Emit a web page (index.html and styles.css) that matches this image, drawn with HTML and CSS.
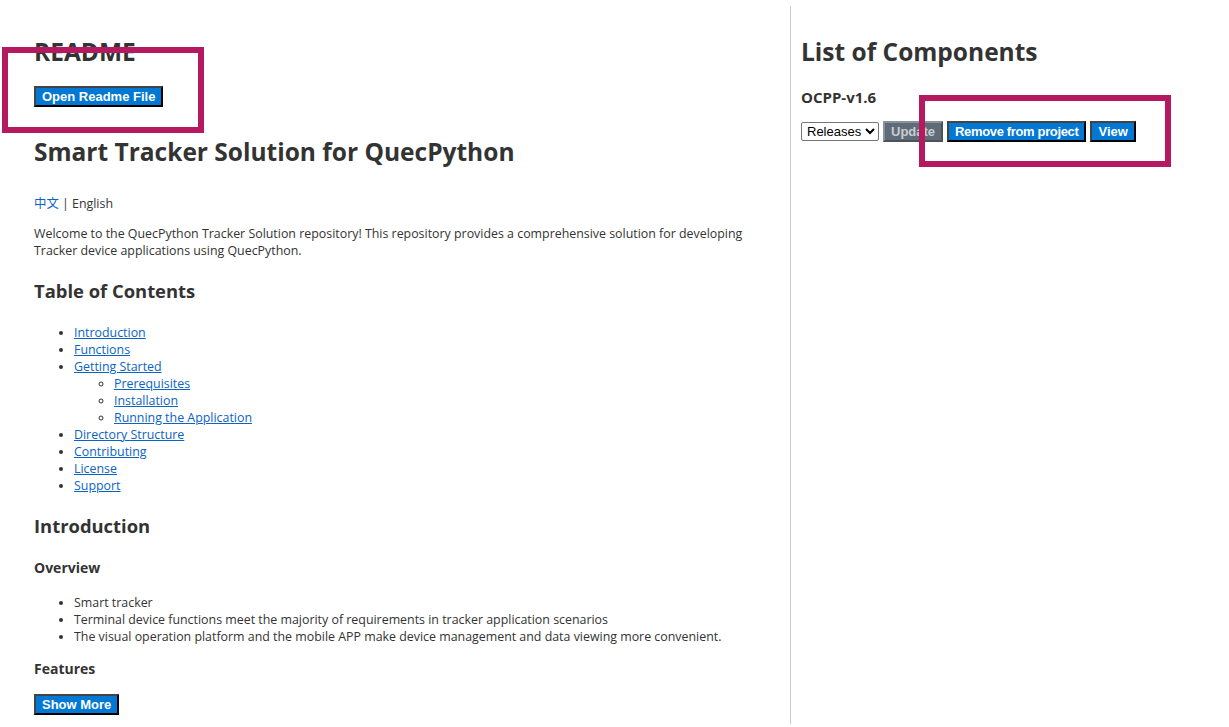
FILE: index.html
```html
<!DOCTYPE html>
<html lang="en">
<head>
<meta charset="utf-8">
<title>README</title>
<link rel="stylesheet" href="styles.css">
</head>
<body>
<div class="page">
  <main class="readme">
    <h1 class="h1 first">README</h1>
    <div class="btn-row"><button class="btn">Open Readme File</button></div>
    <h1 class="h1 title">Smart Tracker Solution for QuecPython</h1>
    <p class="lang"><a class="plain-link" href="#">中文</a> | English</p>
    <p class="intro">Welcome to the QuecPython Tracker Solution repository! This repository provides a comprehensive solution for developing Tracker device applications using QuecPython.</p>
    <h2 class="h2 toc-title">Table of Contents</h2>
    <ul class="list toc">
      <li><a href="#">Introduction</a></li>
      <li><a href="#">Functions</a></li>
      <li><a href="#">Getting Started</a>
        <ul class="sub">
          <li><a href="#">Prerequisites</a></li>
          <li><a href="#">Installation</a></li>
          <li><a href="#">Running the Application</a></li>
        </ul>
      </li>
      <li><a href="#">Directory Structure</a></li>
      <li><a href="#">Contributing</a></li>
      <li><a href="#">License</a></li>
      <li><a href="#">Support</a></li>
    </ul>
    <h2 class="h2 intro-title">Introduction</h2>
    <h3 class="h3 overview">Overview</h3>
    <ul class="list points">
      <li>Smart tracker</li>
      <li>Terminal device functions meet the majority of requirements in tracker application scenarios</li>
      <li>The visual operation platform and the mobile APP make device management and data viewing more convenient.</li>
    </ul>
    <h3 class="h3 features">Features</h3>
    <div class="btn-row more"><button class="btn">Show More</button></div>
  </main>
  <aside class="components">
    <h1 class="h1 first">List of Components</h1>
    <h3 class="h3 comp-name">OCPP-v1.6</h3>
    <div class="controls">
      <select class="select"><option>Releases</option></select>
      <button class="btn btn-gray">Update</button>
      <button class="btn btn-tight">Remove from project</button>
      <button class="btn">View</button>
    </div>
  </aside>
</div>
<div class="mark mark-left"></div>
<div class="mark mark-right"></div>
</body>
</html>
```

FILE: styles.css
```css
html, body {
  margin: 0;
  padding: 0;
  background: #ffffff;
}
body {
  font-family: "Open Sans", "Noto Sans", "Noto Sans CJK SC", sans-serif;
  font-size: 12.4px;
  line-height: 17px;
  color: #333333;
}
.page {
  display: flex;
  padding-top: 6px;
}
.readme {
  box-sizing: border-box;
  width: 791px;
  height: 718px;
  padding: 0 26px 0 34px;
  border-right: 1px solid #cccccc;
  overflow: hidden;
}
.components {
  flex: 1;
  padding-left: 10px;
}
.h1 {
  font-size: 24.5px;
  line-height: 32px;
  font-weight: 700;
  margin: 0;
}
.h1.first { margin-top: 30px; }
.h1.title { margin-top: 29px; }
.h2 {
  font-size: 18.4px;
  line-height: 26px;
  font-weight: 700;
  margin: 0;
}
.h3 {
  font-size: 14px;
  line-height: 20px;
  font-weight: 700;
  margin: 0;
}
p { margin: 0; }
.btn-row { margin-top: 18px; }
.btn-row.more { margin-top: 15px; }
.btn {
  font-family: "Liberation Sans", Arial, sans-serif;
  font-size: 13px;
  line-height: 15px;
  font-weight: 700;
  color: #ffffff;
  background: #0078d4;
  padding: 1px 6px;
  margin: 0;
  border-width: 2px;
  border-style: solid;
  border-color: #444444 #000000 #000000 #444444;
  vertical-align: middle;
}
.btn-gray {
  background: #5f6b77;
  color: #c9cdd1;
  border-color: #8a939c #4a525a #4a525a #8a939c;
}
.btn-tight { letter-spacing: -0.35px; }
.lang { margin-top: 27px; }
.intro { margin-top: 13px; }
a { color: #0b63c4; }
.plain-link { text-decoration: none; }
.toc-title { margin-top: 19px; }
.list {
  margin: 0;
  padding-left: 40px;
}
.sub {
  margin: 0;
  padding-left: 40px;
  list-style-type: circle;
}
.toc { margin-top: 20px; }
.intro-title { margin-top: 19px; }
.overview { margin-top: 19px; }
.points { margin-top: 16px; }
.features { margin-top: 14px; }
.comp-name {
  margin-top: 19px;
  font-size: 15px;
}
.controls {
  margin-top: 14px;
  display: flex;
  align-items: center;
  gap: 4px;
}
.select {
  font-family: "Liberation Sans", Arial, sans-serif;
  font-size: 13px;
  height: 19px;
  padding: 0 0 0 1px;
  border: 1px solid #767676;
  border-radius: 2px;
  background: #ffffff;
  color: #000000;
}
.mark {
  position: absolute;
  box-sizing: border-box;
  border: 6px solid #b5195f;
  pointer-events: none;
}
.mark-left {
  left: 2px;
  top: 47px;
  width: 202px;
  height: 86px;
}
.mark-right {
  left: 919px;
  top: 95px;
  width: 252px;
  height: 72px;
}
```
